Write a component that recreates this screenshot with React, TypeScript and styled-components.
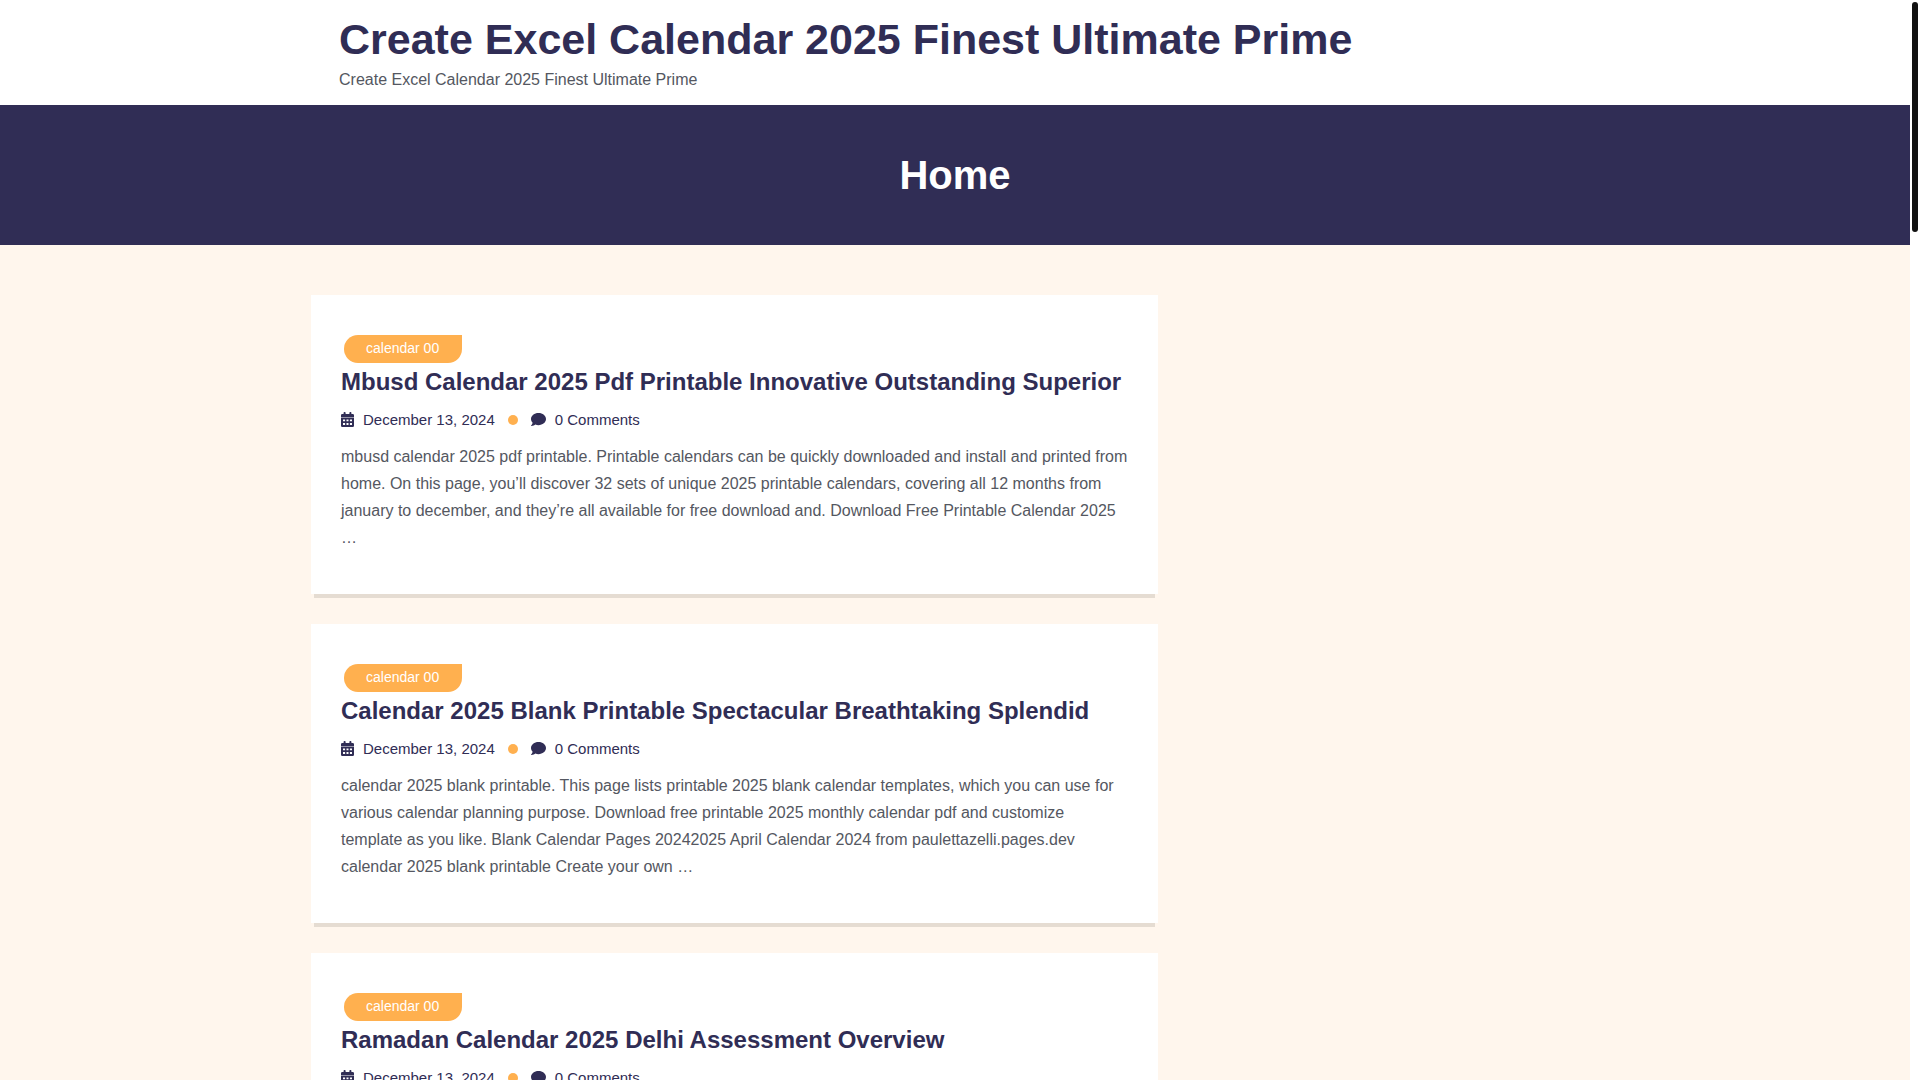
import React from "react";
import styled, { createGlobalStyle } from "styled-components";
import { FaComment } from "react-icons/fa";

const GlobalStyle = createGlobalStyle`
  *, *::before, *::after { box-sizing: border-box; }
  body {
    margin: 0;
    background: #fff;
    color: #545761;
    font-family: "Liberation Sans", Arial, sans-serif;
    font-size: 16px;
    line-height: 27px;
  }
  h1, h2, p { margin: 0; }
  a { color: inherit; text-decoration: none; }
`;

const Shell = styled.div`
  display: flex;
  height: 100vh;
  overflow: hidden;
`;

const Page = styled.div`
  flex: 1;
  min-width: 0;
  height: 100%;
  overflow: hidden;
  background: #fff6ed;
`;

const ScrollTrack = styled.div`
  width: 10px;
  padding: 2px;
  background: #fff;
`;

const ScrollThumb = styled.div`
  height: 230px;
  border-radius: 3px;
  background: #111;
`;

const Container = styled.div`
  width: 100%;
  max-width: 1320px;
  margin: 0 auto;
`;

const SiteHeader = styled.header`
  background: #fff;
  padding: 12px 0;
`;

const Branding = styled(Container)`
  padding: 0 44px;
`;

const SiteTitle = styled.h1`
  color: #302d55;
  font-size: 43px;
  line-height: 54px;
`;

const Banner = styled.div`
  display: flex;
  align-items: center;
  justify-content: center;
  height: 140px;
  background: #302d55;
`;

const BannerTitle = styled.h2`
  color: #fff;
  font-size: 40px;
  line-height: 48px;
`;

const Content = styled(Container)`
  display: grid;
  grid-template-columns: 2fr 1fr;
  padding: 50px 0;
`;

const Posts = styled.main`
  display: flex;
  flex-direction: column;
  gap: 30px;
  padding: 0 17px 0 16px;
`;

const Card = styled.article`
  display: flex;
  flex-direction: column;
  align-items: flex-start;
  padding: 40px 30px 43px;
  background: #fff;
  box-shadow: 0 7px 0 -3px #e5dcd2;
`;

const Category = styled.a`
  margin-left: 3px;
  padding: 0 23px 2px 22px;
  border-radius: 14px 0 14px 14px;
  background: #ffb04f;
  color: #fff;
  font-size: 14px;
  line-height: 26px;
`;

const PostTitle = styled.h2`
  color: #302d55;
  font-size: 24px;
  line-height: 38px;
`;

const Meta = styled.div`
  display: flex;
  align-items: center;
  gap: 13px;
  margin: 5px 0 10px;
  color: #302d55;
  font-size: 15px;
`;

const MetaItem = styled.a`
  display: flex;
  align-items: center;
  gap: 9px;
`;

const Dot = styled.span`
  width: 10px;
  height: 10px;
  border-radius: 50%;
  background: #ffb04f;
`;

function CalendarIcon() {
  return (
    <svg width="13" height="15" viewBox="0 0 13 15" fill="currentColor" aria-hidden="true">
      <path d="M2.6 0.8Q2.6 0 3.4 0H3.8Q4.6 0 4.6 0.8V2H8.4V0.8Q8.4 0 9.2 0H9.6Q10.4 0 10.4 0.8V2H11.7Q13 2 13 3.3V5H0V3.3Q0 2 1.3 2H2.6Z" />
      <path
        fillRule="evenodd"
        d="M0 5.6H13V13.7Q13 15 11.7 15H1.3Q0 15 0 13.7ZM2 7.4V9.3H4.1V7.4ZM5.5 7.4V9.3H7.5V7.4ZM8.9 7.4V9.3H11V7.4ZM2 11V13H4.1V11ZM5.5 11V13H7.5V11ZM8.9 11V13H11V11Z"
      />
    </svg>
  );
}

const posts = [
  {
    title: "Mbusd Calendar 2025 Pdf Printable Innovative Outstanding Superior",
    excerpt:
      "mbusd calendar 2025 pdf printable. Printable calendars can be quickly downloaded and install and printed from home. On this page, you’ll discover 32 sets of unique 2025 printable calendars, covering all 12 months from january to december, and they’re all available for free download and. Download Free Printable Calendar 2025 …",
  },
  {
    title: "Calendar 2025 Blank Printable Spectacular Breathtaking Splendid",
    excerpt:
      "calendar 2025 blank printable. This page lists printable 2025 blank calendar templates, which you can use for various calendar planning purpose. Download free printable 2025 monthly calendar pdf and customize template as you like. Blank Calendar Pages 20242025 April Calendar 2024 from paulettazelli.pages.dev calendar 2025 blank printable Create your own …",
  },
  {
    title: "Ramadan Calendar 2025 Delhi Assessment Overview",
    excerpt: "",
  },
];

export default function App() {
  return (
    <>
      <GlobalStyle />
      <Shell>
        <Page>
          <SiteHeader>
            <Branding>
              <SiteTitle>
                <a href="#">Create Excel Calendar 2025 Finest Ultimate Prime</a>
              </SiteTitle>
              <p>Create Excel Calendar 2025 Finest Ultimate Prime</p>
            </Branding>
          </SiteHeader>
          <Banner>
            <BannerTitle>Home</BannerTitle>
          </Banner>
          <Content>
            <Posts>
              {posts.map((post) => (
                <Card key={post.title}>
                  <Category href="#">calendar 00</Category>
                  <PostTitle>
                    <a href="#">{post.title}</a>
                  </PostTitle>
                  <Meta>
                    <MetaItem href="#">
                      <CalendarIcon />
                      December 13, 2024
                    </MetaItem>
                    <Dot />
                    <MetaItem href="#">
                      <FaComment aria-hidden />0 Comments
                    </MetaItem>
                  </Meta>
                  <p>{post.excerpt}</p>
                </Card>
              ))}
            </Posts>
          </Content>
        </Page>
        <ScrollTrack aria-hidden>
          <ScrollThumb />
        </ScrollTrack>
      </Shell>
    </>
  );
}
